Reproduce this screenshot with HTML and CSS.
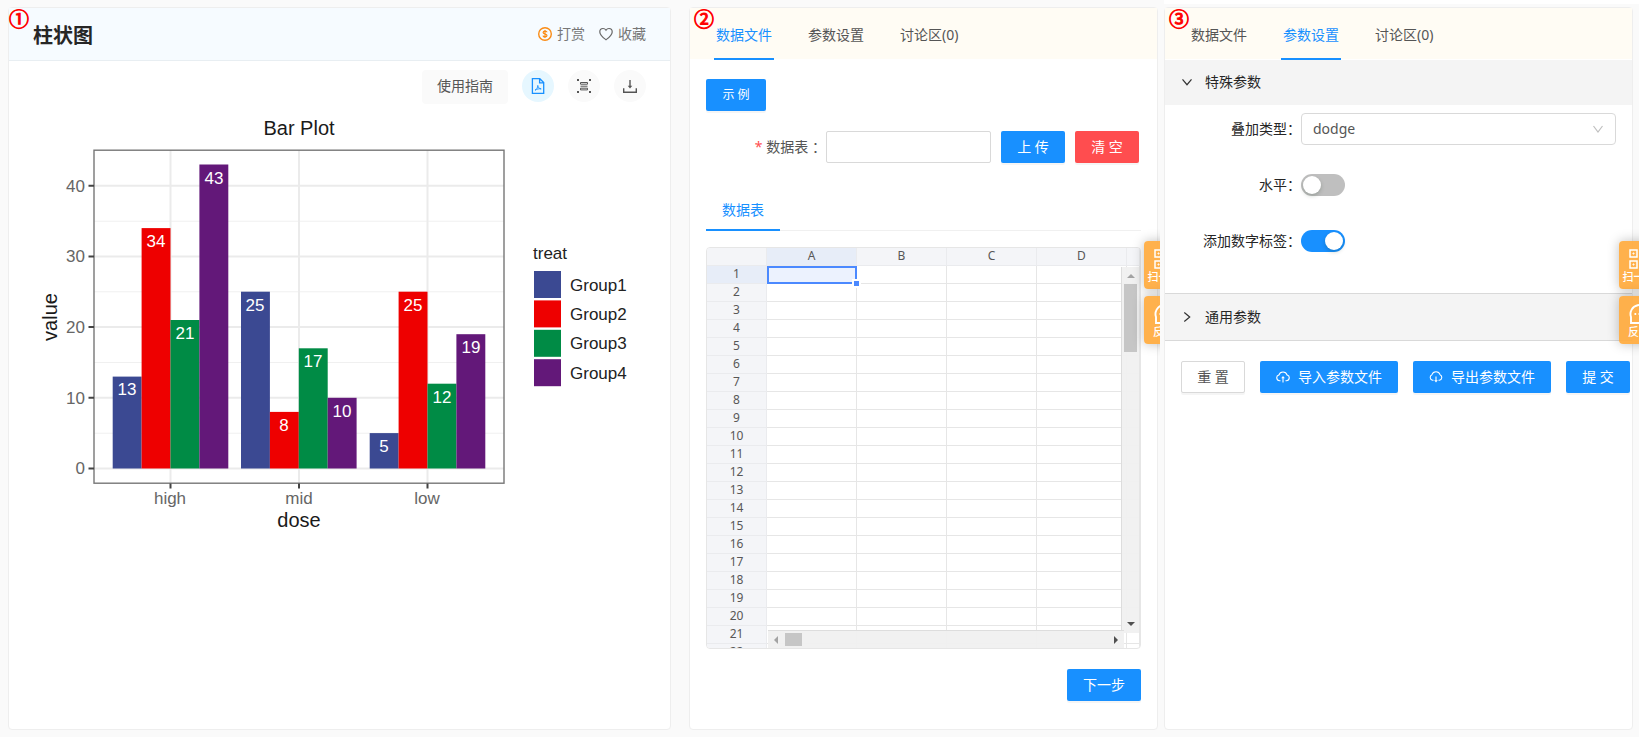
FILE: index.html
```html
<!DOCTYPE html>
<html lang="zh-CN">
<head>
<meta charset="utf-8">
<title>柱状图</title>
<link rel="stylesheet" href="styles.css">
</head>
<body>
<main class="workspace">

  <section class="column column-result">
    <div class="panel">
      <span class="step">①</span>
      <header class="result-head">
        <h1 class="result-title">柱状图</h1>
        <div class="result-links">
          <button class="link-btn" type="button">
            <svg class="icon" viewBox="0 0 14 14" fill="none" stroke="#fa8c16"><circle cx="7" cy="7" r="6.3" stroke-width="1.4"/><path d="M9 5.3C8.900 4.400 8 4.100 7 4.100S5.100 4.500 5.100 5.500 6.100 6.800 7 7 9 7.500 9 8.600 8 9.900 7 9.900 5.100 9.600 5 8.600M7 3v8" stroke-width="1.200"/></svg>
            打赏
          </button>
          <button class="link-btn" type="button">
            <svg class="icon" viewBox="0 0 14 14" fill="none" stroke="#666" stroke-width="1.200"><path d="M7 12.700C4 10.500.8 8.200.8 4.900.8 3 2.200 1.500 4 1.500c1.200 0 2.300.6 3 1.700.7-1.100 1.800-1.700 3-1.700 1.800 0 3.200 1.500 3.200 3.400 0 3.300-3.200 5.600-6.200 7.800z"/></svg>
            收藏
          </button>
        </div>
      </header>

      <div class="toolbar">
        <button class="guide-btn" type="button">使用指南</button>
        <button class="round-btn round-btn-active" type="button" aria-label="PDF">
          <svg class="icon-lg" viewBox="0 0 16 16" fill="none" stroke="#1890ff" stroke-width="1.300"><path d="M2.400.7h7.400l3.900 3.900v10.700H2.400zM9.600.7v4.100h4.100"/><path d="M5 12.200c1.600-.7 2.800-2.600 2.800-4.800.3 2 1.300 3.300 3.400 3.500-2.200-.3-4.400.1-6.200 1.300z" stroke-width=".9"/></svg>
        </button>
        <button class="round-btn" type="button" aria-label="全屏">
          <svg class="icon-lg" viewBox="0 0 16 16" fill="#555"><path d="M1 1h2v2H1zM13 1h2v2h-2zM1 13h2v2H1zM13 13h2v2h-2z"/><path d="M4.500 4.500h7v1.700h-7zM4.500 10.200h7v1.700h-7z" fill="none" stroke="#555"/><path d="M4.500 7.700h7v1h-7z"/></svg>
        </button>
        <button class="round-btn" type="button" aria-label="下载">
          <svg class="icon-lg" viewBox="0 0 16 16" fill="none" stroke="#555" stroke-width="1.400"><path d="M1.700 10.300v4h12.600v-4M8 2v6"/><path d="M5.700 7.700h4.600L8 10.600z" fill="#555" stroke="none"/></svg>
        </button>
      </div>

      <svg class="chart" viewBox="9 104 661 440" role="img" aria-label="Bar Plot">
        <g class="grid-minor">
          <path d="M94 221.200H504M94 291.800H504M94 362.500H504M94 433.200H504"/>
        </g>
        <g class="grid-major">
          <path d="M94 185.800H504M94 256.400H504M94 327.100H504M94 397.800H504M94 468.500H504M170.500 150V483M299 150V483M427.500 150V483"/>
        </g>
        <g class="bar-1">
          <rect x="112.700" y="376.600" width="28.900" height="91.900"/>
          <rect x="241" y="291.700" width="28.900" height="176.800"/>
          <rect x="369.700" y="433.100" width="28.900" height="35.400"/>
          <rect x="534" y="271" width="27" height="27"/>
        </g>
        <g class="bar-2">
          <rect x="141.600" y="228.100" width="28.900" height="240.400"/>
          <rect x="269.900" y="411.900" width="28.900" height="56.600"/>
          <rect x="398.600" y="291.700" width="28.900" height="176.800"/>
          <rect x="534" y="300.400" width="27" height="27"/>
        </g>
        <g class="bar-3">
          <rect x="170.500" y="320" width="28.900" height="148.500"/>
          <rect x="298.800" y="348.300" width="28.900" height="120.200"/>
          <rect x="427.500" y="383.700" width="28.900" height="84.800"/>
          <rect x="534" y="329.800" width="27" height="27"/>
        </g>
        <g class="bar-4">
          <rect x="199.400" y="164.500" width="28.900" height="304"/>
          <rect x="327.700" y="397.800" width="28.900" height="70.700"/>
          <rect x="456.400" y="334.200" width="28.900" height="134.300"/>
          <rect x="534" y="359.200" width="27" height="27"/>
        </g>
        <rect class="frame" x="94" y="150.200" width="410" height="333"/>
        <path class="ticks" d="M88.500 185.800h5.500M88.500 256.400h5.500M88.500 327.100h5.500M88.500 397.800h5.500M88.500 468.500h5.500M170.500 483.500v5M299 483.500v5M427.500 483.500v5"/>
        <g class="bar-label">
          <text x="127" y="395">13</text><text x="156" y="247">34</text><text x="185" y="339">21</text><text x="214" y="184">43</text>
          <text x="255" y="311">25</text><text x="284" y="431">8</text><text x="313" y="367">17</text><text x="342" y="417">10</text>
          <text x="384" y="452">5</text><text x="413" y="311">25</text><text x="442" y="403">12</text><text x="471" y="353">19</text>
        </g>
        <g class="axis-y">
          <text x="85" y="192">40</text><text x="85" y="262">30</text><text x="85" y="333">20</text><text x="85" y="404">10</text><text x="85" y="474">0</text>
        </g>
        <g class="axis-x">
          <text x="170" y="504">high</text><text x="299" y="504">mid</text><text x="427" y="504">low</text>
        </g>
        <g class="axis-title">
          <text x="299" y="135">Bar Plot</text>
          <text x="299" y="527">dose</text>
          <text transform="translate(57 317) rotate(-90)">value</text>
        </g>
        <g class="legend">
          <text x="533" y="259">treat</text>
          <text x="570" y="291">Group1</text><text x="570" y="320">Group2</text><text x="570" y="349">Group3</text><text x="570" y="379">Group4</text>
        </g>
      </svg>
    </div>
  </section>

  <section class="column column-data">
    <div class="panel">
      <span class="step">②</span>
      <nav class="tabs">
        <button class="tab tab-active" type="button">数据文件</button>
        <button class="tab" type="button">参数设置</button>
        <button class="tab" type="button">讨论区(0)</button>
      </nav>
      <div class="data-body">
        <button class="btn btn-primary btn-small" type="button">示 例</button>
        <div class="upload-row">
          <label class="upload-label" for="table-file"><span class="required">*</span> 数据表 ：</label>
          <input class="text-input" id="table-file" type="text">
          <button class="btn btn-primary" type="button">上 传</button>
          <button class="btn btn-danger" type="button">清 空</button>
        </div>
        <div class="sheet-tabs">
          <button class="sheet-tab" type="button">数据表</button>
        </div>
        <div class="sheet">
          <table class="grid">
            <colgroup><col class="col-index"><col class="col-cell"><col class="col-cell"><col class="col-cell"><col class="col-cell"><col></colgroup>
            <thead><tr><th></th><th class="picked">A</th><th>B</th><th>C</th><th>D</th><th></th></tr></thead>
            <tbody>
              <tr><th class="picked">1</th><td class="cell-active"><span class="handle"></span></td><td></td><td></td><td></td><td></td></tr>
              <tr><th>2</th><td></td><td></td><td></td><td></td><td></td></tr>
              <tr><th>3</th><td></td><td></td><td></td><td></td><td></td></tr>
              <tr><th>4</th><td></td><td></td><td></td><td></td><td></td></tr>
              <tr><th>5</th><td></td><td></td><td></td><td></td><td></td></tr>
              <tr><th>6</th><td></td><td></td><td></td><td></td><td></td></tr>
              <tr><th>7</th><td></td><td></td><td></td><td></td><td></td></tr>
              <tr><th>8</th><td></td><td></td><td></td><td></td><td></td></tr>
              <tr><th>9</th><td></td><td></td><td></td><td></td><td></td></tr>
              <tr><th>10</th><td></td><td></td><td></td><td></td><td></td></tr>
              <tr><th>11</th><td></td><td></td><td></td><td></td><td></td></tr>
              <tr><th>12</th><td></td><td></td><td></td><td></td><td></td></tr>
              <tr><th>13</th><td></td><td></td><td></td><td></td><td></td></tr>
              <tr><th>14</th><td></td><td></td><td></td><td></td><td></td></tr>
              <tr><th>15</th><td></td><td></td><td></td><td></td><td></td></tr>
              <tr><th>16</th><td></td><td></td><td></td><td></td><td></td></tr>
              <tr><th>17</th><td></td><td></td><td></td><td></td><td></td></tr>
              <tr><th>18</th><td></td><td></td><td></td><td></td><td></td></tr>
              <tr><th>19</th><td></td><td></td><td></td><td></td><td></td></tr>
              <tr><th>20</th><td></td><td></td><td></td><td></td><td></td></tr>
              <tr><th>21</th><td></td><td></td><td></td><td></td><td></td></tr>
              <tr><th>22</th><td></td><td></td><td></td><td></td><td></td></tr>
            </tbody>
          </table>
          <div class="scroll scroll-y">
            <svg class="arrow" viewBox="0 0 8 8"><path d="M0 6h8L4 2z" fill="#a3a3a3"/></svg>
            <span class="thumb"></span>
            <svg class="arrow arrow-end" viewBox="0 0 8 8"><path d="M0 2h8L4 6z" fill="#505050"/></svg>
          </div>
          <div class="scroll scroll-x">
            <svg class="arrow" viewBox="0 0 8 8"><path d="M6 0v8L2 4z" fill="#a3a3a3"/></svg>
            <span class="thumb"></span>
            <svg class="arrow arrow-end" viewBox="0 0 8 8"><path d="M2 0v8l4-4z" fill="#505050"/></svg>
          </div>
        </div>
        <div class="next-row"><button class="btn btn-primary" type="button">下一步</button></div>
      </div>
    </div>
    <aside class="floats">
      <button class="float-btn" type="button">
        <svg class="float-icon" viewBox="0 0 22 22" fill="none" stroke="#fff" stroke-width="1.500"><path d="M2 2h7v7H2zM13 2h7v7h-7zM2 13h7v7H2zM13 13h3v3h-3zM18 18h2v2h-2z"/><path d="M5 5h1v1H5zM16 5h1v1h-1zM5 16h1v1H5z" stroke-width="1"/></svg>
        <span>扫一扫</span>
      </button>
      <button class="float-btn" type="button">
        <svg class="float-icon" viewBox="0 0 22 22" fill="none" stroke="#fff" stroke-width="1.900"><path d="M3 20v-6A9 9 0 1 1 11 20z"/><path d="M6.500 11h1.700M10.500 11h1.700M14.500 11h1.700"/></svg>
        <span>反馈</span>
      </button>
    </aside>
  </section>

  <section class="column column-params">
    <div class="panel">
      <span class="step">③</span>
      <nav class="tabs">
        <button class="tab" type="button">数据文件</button>
        <button class="tab tab-active" type="button">参数设置</button>
        <button class="tab" type="button">讨论区(0)</button>
      </nav>
      <button class="fold" type="button">
        <svg class="fold-icon" viewBox="0 0 12 12"><path d="M1.500 3.300L6 8.700l4.500-5.400" fill="none" stroke="#333" stroke-width="1.200"/></svg>
        特殊参数
      </button>
      <div class="params">
        <label class="param-label" for="stack-type">叠加类型：</label>
        <div class="select-box">
          <select class="select" id="stack-type"><option>dodge</option></select>
          <svg class="select-icon" viewBox="0 0 12 12"><path d="M1.500 3L6 9l4.500-6" fill="none" stroke="#bfbfbf" stroke-width="1.200"/></svg>
        </div>
        <label class="param-label" for="horizontal">水平：</label>
        <input class="switch" id="horizontal" type="checkbox">
        <label class="param-label" for="number-label">添加数字标签：</label>
        <input class="switch" id="number-label" type="checkbox" checked>
      </div>
      <button class="fold fold-closed" type="button">
        <svg class="fold-icon" viewBox="0 0 12 12"><path d="M3.300 1.500L8.700 6l-5.400 4.500" fill="none" stroke="#333" stroke-width="1.200"/></svg>
        通用参数
      </button>
      <div class="actions">
        <button class="btn btn-plain" type="button">重 置</button>
        <button class="btn btn-primary" type="button">
          <svg class="icon" viewBox="0 0 14 14" fill="none" stroke="#fff" stroke-width="1.100"><path d="M4.500 10.700H3.600A2.900 2.900 0 0 1 2.900 5a4.300 4.300 0 0 1 8.200 0 2.900 2.900 0 0 1-.7 5.700H9.500M7 12.500V7"/><path d="M5.200 8.300h3.600L7 6z" fill="#fff" stroke="none"/></svg>
          导入参数文件
        </button>
        <button class="btn btn-primary" type="button">
          <svg class="icon" viewBox="0 0 14 14" fill="none" stroke="#fff" stroke-width="1.100"><path d="M4.500 10.200H3.600A2.900 2.900 0 0 1 2.900 4.700a4.300 4.300 0 0 1 8.200 0 2.900 2.900 0 0 1-.7 5.500H9.500M7 6.500V11"/><path d="M5.200 10.300h3.600L7 12.600z" fill="#fff" stroke="none"/></svg>
          导出参数文件
        </button>
        <button class="btn btn-primary" type="button">提 交</button>
      </div>
    </div>
    <aside class="floats">
      <button class="float-btn" type="button">
        <svg class="float-icon" viewBox="0 0 22 22" fill="none" stroke="#fff" stroke-width="1.500"><path d="M2 2h7v7H2zM13 2h7v7h-7zM2 13h7v7H2zM13 13h3v3h-3zM18 18h2v2h-2z"/><path d="M5 5h1v1H5zM16 5h1v1h-1zM5 16h1v1H5z" stroke-width="1"/></svg>
        <span>扫一扫</span>
      </button>
      <button class="float-btn" type="button">
        <svg class="float-icon" viewBox="0 0 22 22" fill="none" stroke="#fff" stroke-width="1.900"><path d="M3 20v-6A9 9 0 1 1 11 20z"/><path d="M6.500 11h1.700M10.500 11h1.700M14.500 11h1.700"/></svg>
        <span>反馈</span>
      </button>
    </aside>
  </section>

</main>
</body>
</html>
```

FILE: styles.css
```css
* {
  box-sizing: border-box;
}

body {
  margin: 0;
  background: #fafafa;
  color: #555;
  font-family: "Noto Sans", "Noto Sans CJK SC", sans-serif;
  font-size: 14px;
  line-height: 22px;
}

button,
input,
select {
  font: inherit;
  color: inherit;
}

button {
  margin: 0;
  padding: 0;
  border: 0;
  background: none;
  white-space: nowrap;
  cursor: pointer;
}

/* columns */

.workspace {
  display: grid;
  grid-template-columns: 680fr 480fr 479fr;
  min-height: 100vh;
}

.column {
  position: relative;
  display: grid;
  grid-template-columns: minmax(0, 1fr);
  min-width: 0;
  overflow: hidden;
}

.column-result {
  padding: 7px 9px 7px 8px;
}

.column-data {
  padding: 7px 2px 7px 9px;
}

.column-params {
  margin-left: 4px;
  padding: 3px 6px 7px 0;
  border-top: 4px solid #fff;
}

.panel {
  position: relative;
  border: 1px solid #eee;
  border-radius: 4px;
  background: #fff;
}

.step {
  position: absolute;
  top: 0;
  left: 0;
  color: #f00;
  font-family: "Noto Sans CJK SC", sans-serif;
  font-size: 20px;
  line-height: 22px;
  -webkit-text-stroke: 1px #f00;
}

.column-data .step,
.column-params .step {
  left: 4px;
}

/* result */

.result-head {
  display: flex;
  align-items: center;
  justify-content: space-between;
  height: 53px;
  padding: 0 24px;
  border-bottom: 1px solid #e8eef2;
  background: #f6fbff;
}

.result-title {
  margin: 0;
  padding-top: 4px;
  color: #262626;
  font-size: 20px;
  font-weight: 700;
  line-height: 28px;
}

.result-links {
  display: flex;
  gap: 14px;
}

.link-btn {
  display: flex;
  align-items: center;
  gap: 5px;
  color: #777;
}

.icon {
  width: 14px;
  height: 14px;
}

.icon-lg {
  width: 16px;
  height: 16px;
}

.toolbar {
  display: flex;
  justify-content: flex-end;
  gap: 14px;
  padding: 9px 24px 0;
}

.guide-btn {
  height: 34px;
  padding: 0 15px 2px;
  border-radius: 4px;
  background: #fafafa;
}

.round-btn {
  display: flex;
  align-items: center;
  justify-content: center;
  width: 32px;
  height: 32px;
  border-radius: 50%;
  background: #fafafa;
}

.round-btn-active {
  background: #e6f7ff;
}

/* chart */

.chart {
  display: block;
  width: 100%;
  font-family: "Liberation Sans", Arial, sans-serif;
  font-size: 17px;
}

.grid-minor {
  stroke: #f0f0f0;
}

.grid-major {
  stroke: #ebebeb;
  stroke-width: 2;
}

.bar-1 { fill: #3b4992; }
.bar-2 { fill: #ee0000; }
.bar-3 { fill: #008b45; }
.bar-4 { fill: #631879; }

.frame {
  fill: none;
  stroke: #777;
  stroke-width: 1.4;
}

.ticks {
  fill: none;
  stroke: #444;
  stroke-width: 2;
}

.bar-label {
  fill: #fff;
  text-anchor: middle;
}

.axis-y {
  fill: #666;
  text-anchor: end;
}

.axis-x {
  fill: #666;
  text-anchor: middle;
}

.axis-title {
  fill: #1a1a1a;
  font-size: 20px;
  text-anchor: middle;
}

.legend {
  fill: #222;
}

/* tabs */

.tabs {
  display: flex;
  gap: 32px;
  height: 52px;
  padding: 0 24px;
  background: linear-gradient(#fffcf4, #fffcf4) 0 0 / 100% 51px no-repeat;
}

.tab {
  padding: 2px 2px 0;
  border-top: 2px solid transparent;
  border-bottom: 2px solid transparent;
}

.tab-active {
  border-bottom-color: #1890ff;
  color: #1890ff;
}

/* buttons */

.btn {
  display: flex;
  align-items: center;
  justify-content: center;
  gap: 8px;
  height: 32px;
  padding: 0 16px;
  border-radius: 2px;
  box-shadow: 0 2px 0 rgba(0, 0, 0, 0.04);
}

.btn-primary {
  background: #1890ff;
  color: #fff;
}

.btn-danger {
  background: #ff4d4f;
  color: #fff;
}

.btn-plain {
  border: 1px solid #d9d9d9;
  padding: 0 15px;
  background: #fff;
}

.btn-small {
  min-width: 60px;
  font-size: 12px;
}

/* data file */

.data-body {
  padding: 19px 16px;
}

.upload-row {
  display: flex;
  gap: 10px;
  margin: 20px 2px 0 0;
}

.upload-row .btn {
  min-width: 64px;
}

.upload-label {
  display: flex;
  align-items: center;
  justify-content: flex-end;
  gap: 4px;
  width: 120px;
  margin-right: -10px;
}

.required {
  color: #ff4d4f;
}

.text-input {
  flex: 1;
  min-width: 0;
  height: 32px;
  padding: 0 11px;
  border: 1px solid #d9d9d9;
  border-radius: 2px;
  background: #fff;
}

.sheet-tabs {
  display: flex;
  margin-top: 27px;
  box-shadow: inset 0 -1px 0 #f0f0f0;
}

.sheet-tab {
  height: 41px;
  padding: 0 16px;
  border-bottom: 2px solid #1890ff;
  color: #1890ff;
}

/* spreadsheet */

.sheet {
  position: relative;
  height: 402px;
  margin-top: 16px;
  overflow: hidden;
  border: 1px solid #e6e6e6;
  border-radius: 4px;
}

.grid {
  width: 100%;
  table-layout: fixed;
  border-collapse: separate;
  border-spacing: 0;
}

.col-index {
  width: 60px;
}

.col-cell {
  width: 90px;
}

.grid th,
.grid td {
  height: 18px;
  padding: 0;
  border-right: 1px solid #e6e6e6;
  border-bottom: 1px solid #e6e6e6;
  font-size: 12px;
  line-height: 15px;
  vertical-align: top;
}

.grid th {
  border-color: #eaebee;
  background: #f4f5f8;
  color: #585757;
  font-weight: 400;
}

.grid th.picked {
  background: #e7edf8;
}

.grid td.cell-active {
  position: relative;
  background: #ecf2fe;
  border-color: #4b89ff;
  box-shadow: inset 2px 2px 0 #4b89ff, inset -1px -1px 0 #4b89ff;
}

.handle {
  position: absolute;
  right: -5px;
  bottom: -5px;
  width: 9px;
  height: 9px;
  border: 2px solid #fff;
  background: #4b89ff;
}

.scroll {
  position: absolute;
  display: flex;
  align-items: center;
  background: rgba(240, 240, 240, 0.95);
}

.scroll-y {
  top: 19px;
  right: 1px;
  bottom: 15px;
  flex-direction: column;
  width: 18px;
  padding: 5px 0;
  border-left: 1px solid #ddd;
}

.scroll-x {
  right: 16px;
  bottom: 0;
  left: 61px;
  height: 18px;
  padding: 0 4px;
  border-top: 1px solid #ddd;
}

.arrow {
  width: 8px;
  height: 8px;
}

.scroll-y .arrow-end {
  margin-top: auto;
}

.scroll-x .arrow-end {
  margin-left: auto;
}

.thumb {
  background: #c6c6c6;
}

.scroll-y .thumb {
  width: 13px;
  height: 68px;
  margin-top: 4px;
}

.scroll-x .thumb {
  width: 17px;
  height: 13px;
  margin-left: 5px;
}

.next-row {
  display: flex;
  justify-content: flex-end;
  margin-top: 20px;
}

/* floating buttons */

.floats {
  position: absolute;
  top: 241px;
  right: -24px;
  display: flex;
  flex-direction: column;
  gap: 7px;
}

.column-params .floats {
  top: 237px;
  right: -20px;
}

.float-btn {
  display: flex;
  flex-direction: column;
  align-items: center;
  justify-content: center;
  width: 40px;
  height: 48px;
  padding-top: 2px;
  border-radius: 4px;
  background: rgba(255, 168, 56, 0.9);
  box-shadow: 0 0 12px rgba(0, 0, 0, 0.25);
  color: #fff;
  font-size: 11px;
  font-weight: 500;
  line-height: 14px;
}

.float-icon {
  width: 22px;
  height: 22px;
}

/* parameters */

.fold {
  display: flex;
  align-items: center;
  gap: 12px;
  width: 100%;
  height: 45px;
  padding: 0 16px 2px;
  background: #f4f4f4;
  color: #262626;
}

.fold-closed {
  height: 48px;
  padding-bottom: 0;
  border-top: 1px solid #d9d9d9;
  border-bottom: 1px solid #d9d9d9;
}

.fold-icon {
  width: 12px;
  height: 12px;
}

.params {
  display: grid;
  grid-template-columns: 136px minmax(0, 1fr);
  grid-auto-rows: 32px;
  align-items: center;
  row-gap: 24px;
  padding: 8px 16px 36px 0;
}

.param-label {
  color: #262626;
  text-align: right;
}

.select-box {
  position: relative;
}

.select {
  display: block;
  width: 100%;
  height: 32px;
  padding: 0 11px;
  border: 1px solid #d9d9d9;
  border-radius: 4px;
  background: #fff;
  appearance: none;
}

.select-icon {
  position: absolute;
  top: 10px;
  right: 12px;
  width: 12px;
  height: 12px;
  pointer-events: none;
}

.switch {
  display: flex;
  align-items: center;
  width: 44px;
  height: 22px;
  margin: 0;
  padding: 0 2px;
  border-radius: 11px;
  background: #bfbfbf;
  appearance: none;
}

.switch::before {
  content: "";
  width: 18px;
  height: 18px;
  border-radius: 50%;
  background: #fff;
  box-shadow: 0 2px 4px rgba(0, 35, 11, 0.2);
}

.switch:checked {
  justify-content: flex-end;
  background: #1890ff;
}

.actions {
  display: flex;
  gap: 15px;
  padding: 20px 0 0 16px;
}

.actions .btn {
  min-width: 64px;
}
```
